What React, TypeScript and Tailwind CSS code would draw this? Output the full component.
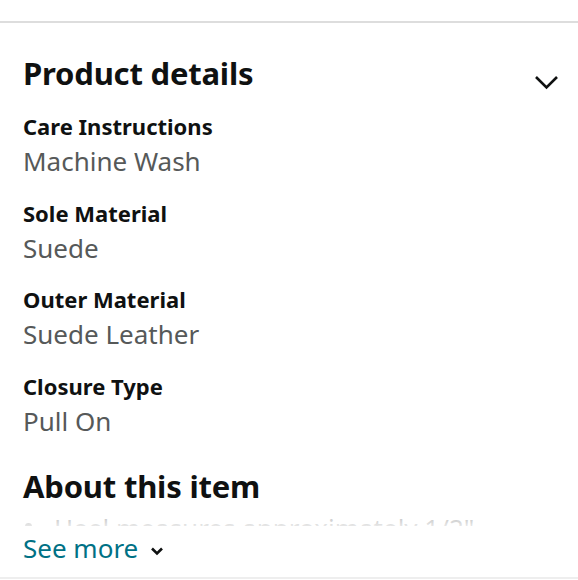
const details = [
  { label: "Care Instructions", value: "Machine Wash" },
  { label: "Sole Material", value: "Suede" },
  { label: "Outer Material", value: "Suede Leather" },
  { label: "Closure Type", value: "Pull On" },
];

export default function App() {
  return (
    <div
      className="w-[578px] h-[580px] overflow-hidden bg-white text-[#0f1111]"
      style={{ fontFamily: '"Noto Sans", "Open Sans", sans-serif' }}
    >
      <div className="h-[21px]" />
      <div className="h-[2px] bg-[#dddddd]" />

      <div className="px-[23px]">
        <div className="flex items-start justify-between pt-[32px] h-[87px]">
          <h2 className="text-[31px] font-bold leading-[37px] tracking-[-0.2px]">Product details</h2>
          <svg width="26" height="16" viewBox="0 0 26 16" className="mr-[-4px] mt-[19px]">
            <path d="M3 3 L13.5 13.5 L24 3" fill="none" stroke="#0f1111" strokeWidth="2.6" />
          </svg>
        </div>

        <div className="flex flex-col">
          {details.map((d) => (
            <div key={d.label} className="h-[86.5px]">
              <div className="text-[22px] font-bold leading-[32px]">{d.label}</div>
              <div className="text-[26px] leading-[38px] text-[#565959]">{d.value}</div>
            </div>
          ))}
        </div>

        <div className="pt-[12px]">
          <h2 className="text-[31px] font-bold leading-[37px] tracking-[-0.2px]">About this item</h2>
          <div className="relative h-[13px] mt-[8px] overflow-hidden">
            <div className="flex items-start h-[13px] overflow-hidden text-[26px] leading-[26px] text-[#0f1111] whitespace-nowrap pt-[2px]">
              <span className="w-[7px] h-[7px] rounded-full bg-[#0f1111] mt-[8px] ml-[2px] mr-[22px]" />
              <span className="h-[11px] overflow-hidden">Heel measures approximately 1/2"</span>
            </div>
            <div className="absolute inset-0 bg-gradient-to-b from-white/70 to-white/90" />
          </div>
          <button className="flex items-center gap-[12px] text-[26px] leading-[32px] text-[#007185] mt-[6px]">
            See more
            <svg width="14" height="10" viewBox="0 0 14 10" className="mt-[6px]">
              <path d="M2 2.5 L7 7.5 L12 2.5" fill="none" stroke="#0f1111" strokeWidth="2.6" />
            </svg>
          </button>
        </div>
      </div>
      <div className="h-[2px] bg-[#eeeeee] mt-[13px]" />
    </div>
  );
}
